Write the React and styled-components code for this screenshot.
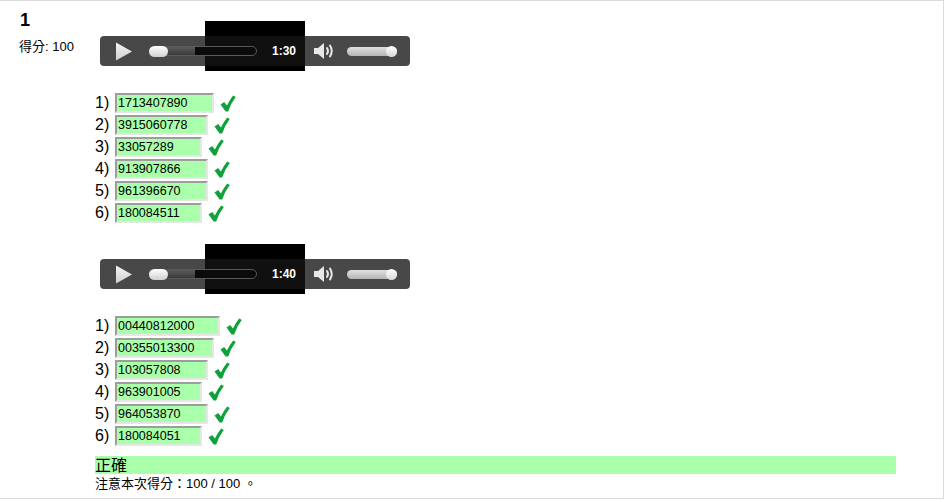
import React from "react";
import styled, { createGlobalStyle } from "styled-components";

const Global = createGlobalStyle`
  html, body { margin: 0; padding: 0; background: #fff; }
  body { font-family: "Liberation Sans", Arial, "Noto Sans CJK TC", sans-serif; color: #000; }
`;

const Page = styled.div`
  box-sizing: border-box;
  width: 944px;
  height: 499px;
  border: 1px solid #dcdcdc;
  border-left: none;
  display: flex;
`;

const Side = styled.div`
  width: 95px;
  flex: none;
  padding: 9px 0 0 19px;
  box-sizing: border-box;
`;

const Num = styled.div`
  font-size: 18px;
  font-weight: bold;
  line-height: 21px;
  padding-left: 1px;
`;

const Score = styled.div`
  margin-top: 8px;
  font-size: 13px;
  line-height: 15px;
`;

const Main = styled.div`
  flex: 1;
  padding-top: 19px;
  display: flex;
  flex-direction: column;
`;

const Media = styled.div`
  position: relative;
  width: 310px;
  height: 50px;
  margin-left: 5px;
  margin-top: ${(p) => p.$top || 0}px;
  display: flex;
  align-items: center;
  justify-content: center;
`;

const Video = styled.div`
  width: 100px;
  height: 50px;
  background: #000;
`;

const Controls = styled.div`
  position: absolute;
  left: 0;
  top: 15px;
  width: 310px;
  height: 30px;
  border-radius: 4px;
  background: rgba(20, 20, 20, 0.78);
  display: flex;
  align-items: center;
`;

const PlayBtn = styled.svg`
  margin-left: 15px;
  width: 18px;
  height: 19px;
  flex: none;
`;

const Track = styled.div`
  position: relative;
  margin-left: 16px;
  width: 108px;
  height: 10px;
  box-sizing: border-box;
  border-radius: 5px;
  border: 1px solid #5a5a5a;
  background: #0b0b0b;
  flex: none;
`;

const Loaded = styled.div`
  position: absolute;
  left: 0;
  top: 0;
  bottom: 0;
  border-radius: 5px 0 0 5px;
  background: linear-gradient(#5a5a5a, #3a3a3a);
`;

const Knob = styled.div`
  position: absolute;
  left: -1px;
  top: -1px;
  width: 19px;
  height: 11px;
  border-radius: 6px;
  background: linear-gradient(#ffffff, #d0d0d0);
`;

const Time = styled.div`
  margin-left: 15px;
  width: 26px;
  font-size: 12px;
  font-weight: bold;
  color: #fff;
  flex: none;
`;

const Speaker = styled.svg`
  margin-left: 15px;
  width: 23px;
  height: 20px;
  flex: none;
`;

const VolTrack = styled.div`
  position: relative;
  margin-left: 11px;
  width: 50px;
  height: 9px;
  border-radius: 5px;
  background: linear-gradient(#e0e0e0, #b5b5b5);
  flex: none;
`;

const VolKnob = styled.div`
  position: absolute;
  right: 0;
  top: -1px;
  width: 11px;
  height: 11px;
  border-radius: 50%;
  background: linear-gradient(#ffffff, #d8d8d8);
`;

const List = styled.div`
  margin-top: ${(p) => p.$top}px;
  display: flex;
  flex-direction: column;
`;

const Row = styled.div`
  height: 22px;
  display: flex;
  align-items: center;
`;

const Label = styled.span`
  font-size: 16px;
  line-height: 18px;
  width: 20px;
  flex: none;
`;

const Answer = styled.div`
  box-sizing: border-box;
  height: 20px;
  border-style: solid;
  border-width: 2px;
  border-color: #9d9d9d #e6e6e6 #e6e6e6 #9d9d9d;
  background: #aaffaa;
  font-size: 12.5px;
  line-height: 16px;
  padding-left: 1px;
  flex: none;
`;

const Check = styled.svg`
  margin-left: 6px;
  width: 16px;
  height: 17px;
  flex: none;
`;

const Correct = styled.div`
  margin-top: 9px;
  width: 801px;
  height: 18px;
  background: #aaffaa;
  font-size: 16px;
  line-height: 19px;
`;

const Note = styled.div`
  font-size: 13px;
  line-height: 15px;
  margin-top: 2px;
`;

const Player = ({ time, top, loaded }) => (
  <Media $top={top}>
    <Video />
    <Controls>
      <PlayBtn viewBox="0 0 18 19">
        <defs>
          <linearGradient id="pg" x1="0" y1="0" x2="0" y2="1">
            <stop offset="0" stopColor="#f4f4f4" />
            <stop offset="1" stopColor="#cfcfcf" />
          </linearGradient>
        </defs>
        <path d="M1 0.5 L17 9.5 L1 18.5 Z" fill="url(#pg)" />
      </PlayBtn>
      <Track>
        <Loaded style={{ width: loaded }} />
        <Knob />
      </Track>
      <Time>{time}</Time>
      <Speaker viewBox="0 0 23 20">
        <path d="M1 7 H5 L11 2 V18 L5 13 H1 Z" fill="#e8e8e8" />
        <path d="M14 7 Q16 10 14 13" stroke="#e8e8e8" strokeWidth="2" fill="none" strokeLinecap="round" />
        <path d="M17 4.5 Q20.5 10 17 15.5" stroke="#e8e8e8" strokeWidth="2" fill="none" strokeLinecap="round" />
      </Speaker>
      <VolTrack>
        <VolKnob />
      </VolTrack>
    </Controls>
  </Media>
);

const Tick = () => (
  <Check viewBox="0 0 16 17">
    <path d="M0.5 9.5 L4.2 7 L6.9 10.6 Q9.5 5 13.2 0.5 L15.8 2 Q11 8 8.2 16.5 L5.6 16.5 Z" fill="#0fa23a" />
  </Check>
);

const Answers = ({ items, top }) => (
  <List $top={top}>
    {items.map(([v, w], i) => (
      <Row key={i}>
        <Label>{i + 1})</Label>
        <Answer style={{ width: w }}>{v}</Answer>
        <Tick />
      </Row>
    ))}
  </List>
);

const first = [
  ["1713407890", 99],
  ["3915060778", 93],
  ["33057289", 87],
  ["913907866", 93],
  ["961396670", 93],
  ["180084511", 87],
];

const second = [
  ["00440812000", 105],
  ["00355013300", 99],
  ["103057808", 93],
  ["963901005", 87],
  ["964053870", 93],
  ["180084051", 87],
];

export default function App() {
  return (
    <>
      <Global />
      <Page>
        <Side>
          <Num>1</Num>
          <Score>得分: 100</Score>
        </Side>
        <Main>
          <Player time="1:30" top={1} loaded="45px" />
          <Answers items={first} top={21} />
          <Player time="1:40" top={20} loaded="45px" />
          <Answers items={second} top={21} />
          <Correct>正確</Correct>
          <Note>注意本次得分：100 / 100 。</Note>
        </Main>
      </Page>
    </>
  );
}
